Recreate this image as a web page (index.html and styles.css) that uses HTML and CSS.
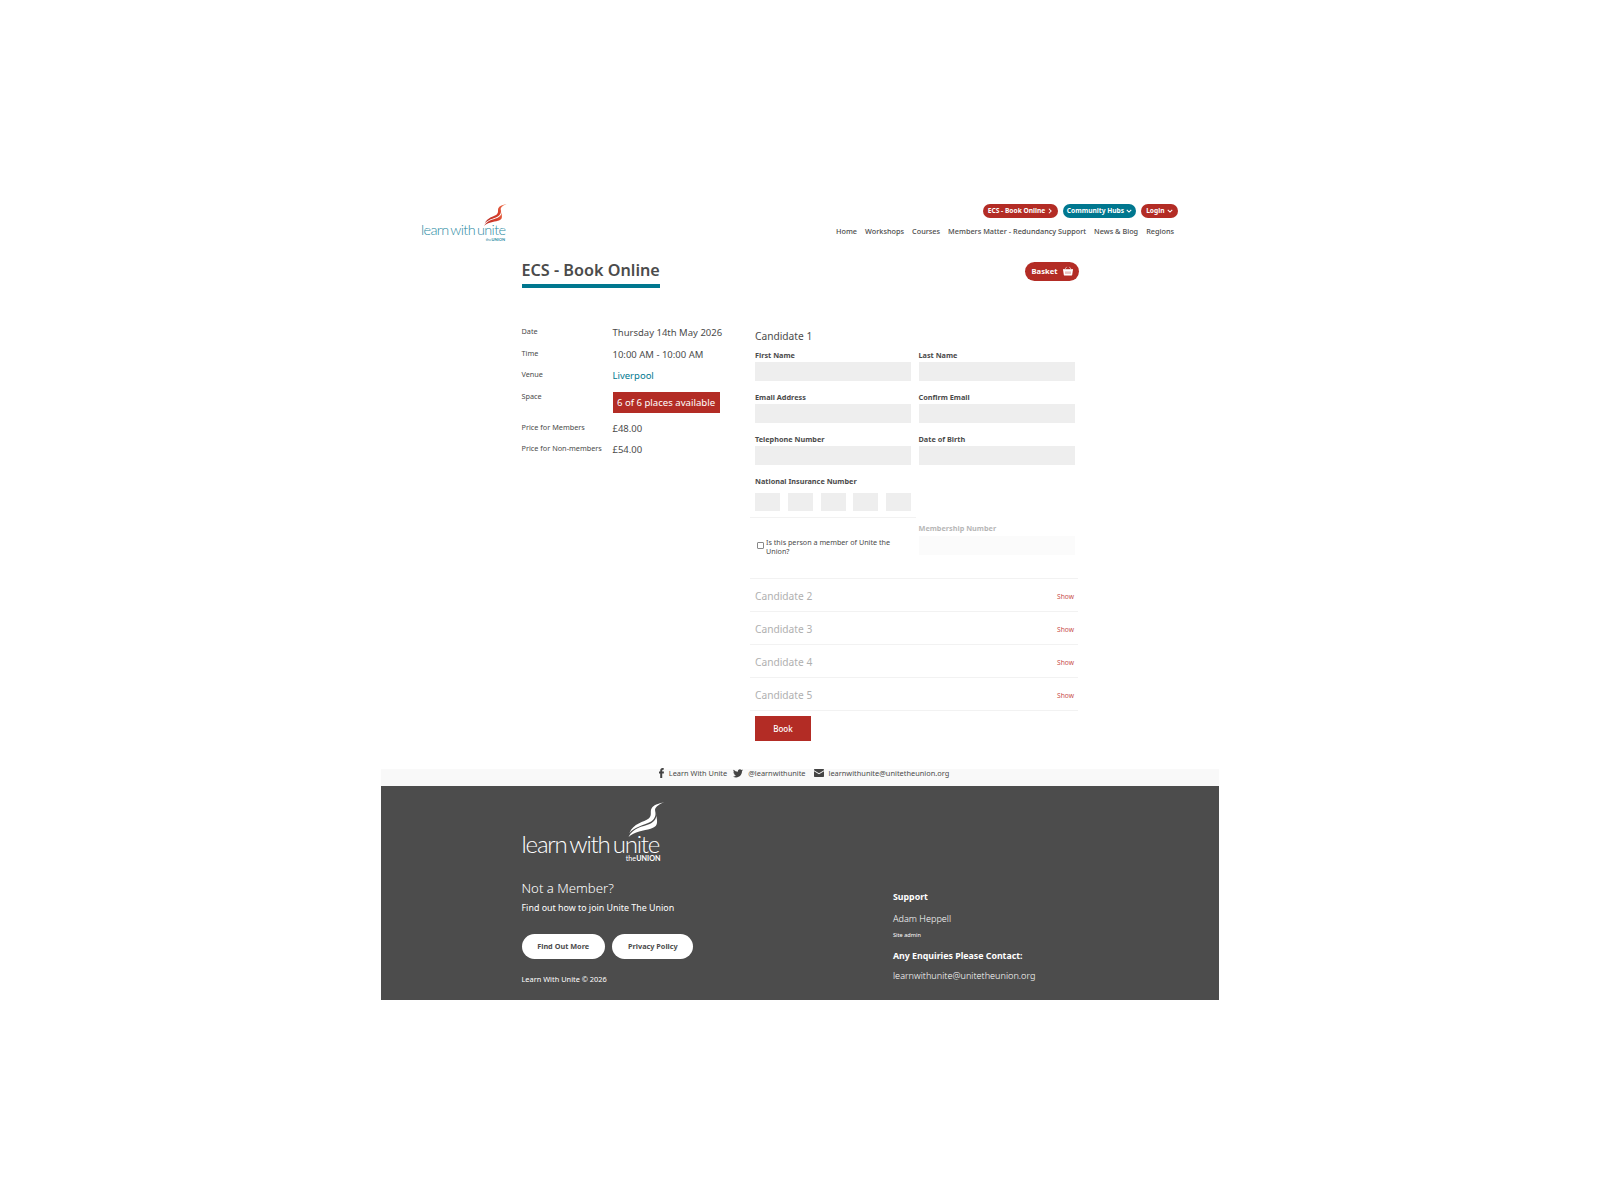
FILE: index.html
```html
<!DOCTYPE html>
<html lang="en">
<head>
    <meta charset="UTF-8">
    <title>ECS - Book Online | Learn With Unite</title>
    <link rel="stylesheet" href="styles.css">
</head>
<body>

<svg class="defs" width="0" height="0">
    <defs>
        <linearGradient id="flameRed" x1="0" y1="1" x2="1" y2="0">
            <stop offset="0" stop-color="#b52a23"/>
            <stop offset="0.6" stop-color="#d8402c"/>
            <stop offset="1" stop-color="#ee7a50"/>
        </linearGradient>
        <symbol id="flame" viewBox="0 0 40 38">
            <path d="M40 0C33 2 28 3 26 7c-2 4 1 7-3 11C18 22 6 23 2 34c5-7 16-9 22-12 6-3 7-8 6-12-1-4 3-7 10-10z"/>
            <path d="M31 12c1 5-1 9-7 12C16 27 6 28 1 38c6-6 17-7 24-9 6-2 7-4 7-8 0-3-1-6-1-9z"/>
        </symbol>
    </defs>
</svg>

<div class="page">
    <header class="top">
        <a class="logo">
            <svg class="logo-flame"><use href="#flame"/></svg>
            <span class="logo-text">learn with unite</span>
            <span class="logo-sub">the<b>UNION</b></span>
        </a>
        <div class="top-right">
            <div class="pills">
                <a class="pill">ECS - Book Online
                    <svg class="chev" viewBox="0 0 8 8"><path d="M2.500 1l3 3-3 3"/></svg>
                </a>
                <a class="pill pill-teal">Community Hubs
                    <svg class="chev" viewBox="0 0 8 8"><path d="M1 2.500l3 3 3-3"/></svg>
                </a>
                <a class="pill pill-login">Login
                    <svg class="chev" viewBox="0 0 8 8"><path d="M1 2.500l3 3 3-3"/></svg>
                </a>
            </div>
            <nav class="nav">
                <a>Home</a>
                <a>Workshops</a>
                <a>Courses</a>
                <a>Members Matter - Redundancy Support</a>
                <a>News &amp; Blog</a>
                <a>Regions</a>
            </nav>
        </div>
    </header>

    <main class="content">
        <div class="title-row">
            <h1>ECS - Book Online</h1>
            <a class="basket">Basket
                <svg class="basket-icon" viewBox="0 0 12 12"><path d="M0 4.200h12v1.300h-.6l-.8 5.500H1.400L.6 5.500H0zM2 4.200L4.500 1M10 4.200L7.500 1"/><path class="basket-gap" d="M3.600 6.500v3M6 6.500v3M8.400 6.500v3"/></svg>
            </a>
        </div>

        <div class="columns">
            <section class="info">
                <div class="info-row"><span class="info-label">Date</span><span class="info-value">Thursday 14th May 2026</span></div>
                <div class="info-row"><span class="info-label">Time</span><span class="info-value">10:00 AM - 10:00 AM</span></div>
                <div class="info-row"><span class="info-label">Venue</span><span class="info-value"><a class="venue">Liverpool</a></span></div>
                <div class="info-row info-row-space"><span class="info-label">Space</span><span class="places">6 of 6 places available</span></div>
                <div class="info-row"><span class="info-label">Price for Members</span><span class="info-value">£48.00</span></div>
                <div class="info-row"><span class="info-label">Price for Non-members</span><span class="info-value">£54.00</span></div>
            </section>

            <form class="booking">
                <h3 class="cand-title">Candidate 1</h3>
                <div class="fields">
                    <div class="field"><label>First Name</label><input type="text"></div>
                    <div class="field"><label>Last Name</label><input type="text"></div>
                    <div class="field"><label>Email Address</label><input type="text"></div>
                    <div class="field"><label>Confirm Email</label><input type="text"></div>
                    <div class="field"><label>Telephone Number</label><input type="text"></div>
                    <div class="field"><label>Date of Birth</label><input type="text"></div>
                    <div class="field ni">
                        <label>National Insurance Number</label>
                        <div class="ni-boxes">
                            <input type="text"><input type="text"><input type="text"><input type="text"><input type="text">
                        </div>
                    </div>
                </div>
                <div class="member-row">
                    <div class="member-check">
                        <input type="checkbox" id="member">
                        <label for="member">Is this person a member of Unite the Union?</label>
                    </div>
                    <div class="field field-off"><label>Membership Number</label><input type="text"></div>
                </div>
                <div class="cand-row"><span>Candidate 2</span><a>Show</a></div>
                <div class="cand-row"><span>Candidate 3</span><a>Show</a></div>
                <div class="cand-row"><span>Candidate 4</span><a>Show</a></div>
                <div class="cand-row cand-last"><span>Candidate 5</span><a>Show</a></div>
                <button type="button" class="book">Book</button>
            </form>
        </div>
    </main>

    <div class="social">
        <a><svg class="soc-icon soc-fb" viewBox="0 0 7 14"><path d="M6.600 0H4.900C2.900 0 1.700 1.300 1.700 3.400V5H0v2.600h1.700V14h2.800V7.600h2.200L7 5H4.500V3.700c0-.7.3-1.100 1.100-1.100h1z"/></svg>Learn With Unite</a>
        <a><svg class="soc-icon" viewBox="0 0 16 16"><path d="M5.026 15c6.038 0 9.341-5.003 9.341-9.334 0-.14 0-.282-.006-.422A6.685 6.685 0 0 0 16 3.542a6.658 6.658 0 0 1-1.889.518 3.301 3.301 0 0 0 1.447-1.817 6.533 6.533 0 0 1-2.087.793A3.286 3.286 0 0 0 7.875 6.030a9.325 9.325 0 0 1-6.767-3.429 3.289 3.289 0 0 0 1.018 4.382A3.323 3.323 0 0 1 .64 6.575v.045a3.288 3.288 0 0 0 2.632 3.218 3.203 3.203 0 0 1-.865.115 3.230 3.230 0 0 1-.614-.057 3.283 3.283 0 0 0 3.067 2.277A6.588 6.588 0 0 1 .78 13.580a6.320 6.320 0 0 1-.78-.045A9.344 9.344 0 0 0 5.026 15z"/></svg>@learnwithunite</a>
        <a><svg class="soc-icon" viewBox="0 0 14 11"><path d="M1 0h12a1 1 0 0 1 1 1v.6L7 6 0 1.600V1a1 1 0 0 1 1-1zM0 3l7 4.400L14 3v7a1 1 0 0 1-1 1H1a1 1 0 0 1-1-1z"/></svg>learnwithunite@unitetheunion.org</a>
    </div>

    <footer class="footer">
        <div class="footer-left">
            <a class="logo logo-big">
                <svg class="logo-flame"><use href="#flame"/></svg>
                <span class="logo-text">learn with unite</span>
                <span class="logo-sub">the<b>UNION</b></span>
            </a>
            <h3>Not a Member?</h3>
            <p class="join">Find out how to join Unite The Union</p>
            <div class="footer-btns">
                <a class="white-btn">Find Out More</a>
                <a class="white-btn">Privacy Policy</a>
            </div>
            <p class="copy">Learn With Unite © 2026</p>
        </div>
        <div class="footer-right">
            <h4>Support</h4>
            <p class="person">Adam Heppell</p>
            <p class="role">Site admin</p>
            <h4 class="enq">Any Enquiries Please Contact:</h4>
            <p class="person contact">learnwithunite@unitetheunion.org</p>
        </div>
    </footer>
</div>

</body>
</html>
```

FILE: styles.css
```css
* {
    box-sizing: border-box;
}
body {
    margin: 0;
    background-color: #fff;
    color: #4b4b4b;
    font-family: "Noto Sans", sans-serif;
}
a {
    color: inherit;
    text-decoration: none;
}
.defs {
    position: absolute;
}
.page {
    width: 838px;
    height: 1000px;
    margin: 0 auto;
    padding-top: 204px;
}

/* header */
.top {
    display: flex;
    justify-content: space-between;
    height: 58px;
    padding: 0 41px 0 40px;
}
.logo {
    display: flex;
    flex-direction: column;
    align-items: flex-end;
    width: 86px;
    height: 38px;
    color: #2b8ba3;
}
.logo-flame {
    width: 24px;
    height: 23px;
    fill: url(#flameRed);
}
.logo-text {
    width: 100%;
    margin-top: -3px;
    font-family: Lato, sans-serif;
    font-weight: 300;
    font-size: 14.5px;
    line-height: 14px;
    white-space: nowrap;
    word-spacing: -1.3px;
    letter-spacing: -0.65px;
}
.logo-sub {
    margin-right: 2px;
    font-family: Lato, sans-serif;
    font-size: 4px;
    line-height: 5px;
}
.top-right {
    display: flex;
    flex-direction: column;
    align-items: flex-end;
}
.pills {
    display: flex;
    gap: 4.5px;
}
.pill {
    display: flex;
    align-items: center;
    justify-content: space-between;
    gap: 2px;
    height: 14px;
    padding: 0 5px 1px;
    border-radius: 7px;
    background-color: #b32c25;
    color: #fff;
    font-size: 6.65px;
    font-weight: 700;
    white-space: nowrap;
}
.pill-teal {
    padding: 0 4px 1px;
    background-color: #00778f;
}
.pill-login {
    padding: 0 5.5px 1px;
}
.chev {
    width: 6px;
    height: 6px;
    fill: none;
    stroke: #fff;
    stroke-width: 1.4;
}
.nav {
    display: flex;
    gap: 8px;
    margin: 8px 4px 0 0;
    font-size: 7.3px;
    font-weight: 500;
    line-height: 11px;
    white-space: nowrap;
}

/* content */
.content {
    width: 698px;
    padding-left: 140.5px;
}
.title-row {
    display: flex;
    justify-content: space-between;
    align-items: flex-start;
}
h1 {
    margin: 0;
    height: 26px;
    border-bottom: 4px solid #00778f;
    font-size: 16.2px;
    font-weight: 600;
    line-height: 17px;
    white-space: nowrap;
}
.basket {
    display: flex;
    align-items: center;
    gap: 5px;
    height: 19px;
    padding: 0 6.5px 1px;
    border-radius: 10px;
    background-color: #b32c25;
    color: #fff;
    font-size: 7.6px;
    font-weight: 700;
}
.basket-icon {
    width: 10px;
    height: 10px;
    fill: #fff;
    stroke: #fff;
    stroke-width: 0.7;
}
.basket-gap {
    stroke: #b32c25;
}
.columns {
    display: flex;
    margin-top: 36px;
}

/* info column */
.info {
    width: 233.5px;
    padding-top: 1px;
}
.info-row {
    display: flex;
    align-items: flex-start;
    height: 21.5px;
}
.info-row-space {
    height: 31px;
}
.info-label {
    width: 91px;
    margin-top: -1px;
    font-size: 7.3px;
    line-height: 14px;
    white-space: nowrap;
}
.info-value {
    font-size: 9.5px;
    line-height: 16px;
    white-space: nowrap;
}
.venue {
    color: #00778f;
}
.places {
    width: 107px;
    height: 21px;
    margin-top: 2.5px;
    background-color: #b32c25;
    color: #fff;
    font-size: 9.6px;
    line-height: 21px;
    text-align: center;
    white-space: nowrap;
}

/* form column */
.booking {
    flex: none;
    width: 328px;
    margin-left: -5px;
}
.cand-title {
    height: 25px;
    margin: 0 5px;
    padding-top: 2px;
    font-size: 10.2px;
    font-weight: 400;
    line-height: 20px;
}
.fields {
    display: grid;
    grid-template-columns: 156px 156px;
    gap: 0 7.5px;
    padding: 0 5px;
}
.field {
    height: 42px;
}
.field label {
    display: block;
    height: 13px;
    font-size: 7.3px;
    font-weight: 700;
    line-height: 12px;
    white-space: nowrap;
}
.field input {
    display: block;
    width: 100%;
    height: 19px;
    border: none;
    background-color: #eee;
}
.ni {
    grid-column: 1;
}
.ni label {
    margin-bottom: 5px;
}
.ni-boxes {
    display: flex;
    justify-content: space-between;
}
.ni-boxes input {
    width: 25px;
    height: 18px;
}
.member-row {
    display: grid;
    grid-template-columns: 166px 156px;
    gap: 2.5px;
    height: 61px;
}
.member-check {
    display: flex;
    align-items: flex-start;
    padding: 19.5px 5px 0 7px;
    border-top: 1px solid #f2f2f2;
}
.member-check input {
    flex: none;
    width: 7px;
    height: 7px;
    margin: 4.5px 2px 0 0;
    border: 1px solid #888;
    border-radius: 1px;
    background-color: #fff;
    appearance: none;
}
.member-check label {
    font-size: 7.2px;
    line-height: 9.5px;
}
.field-off {
    margin-top: 4.5px;
    opacity: 0.4;
}
.field-off label {
    height: 14.5px;
}
.field-off input {
    opacity: 0.5;
}
.cand-row {
    display: flex;
    justify-content: space-between;
    align-items: center;
    height: 33px;
    padding: 2px 4px 0 5px;
    border-top: 1px solid #f2f2f2;
    color: #b0b0b0;
    font-size: 10.2px;
}
.cand-row a {
    color: #c9504a;
    font-size: 6.7px;
}
.cand-last {
    height: 34px;
    border-bottom: 1px solid #f2f2f2;
}
.book {
    display: block;
    width: 56px;
    height: 25px;
    margin: 5px 0 0 5px;
    border: none;
    background-color: #b32c25;
    color: #fff;
    font-family: inherit;
    font-size: 8px;
    font-weight: 500;
}

/* social strip */
.social {
    display: flex;
    justify-content: center;
    align-items: center;
    gap: 8px;
    height: 17px;
    margin-top: 28px;
    padding: 0 0 9px 8px;
    background-color: #f9f9f9;
    font-size: 7.4px;
    white-space: nowrap;
}
.social a {
    display: flex;
    align-items: center;
    gap: 5px;
}
.social a:first-child {
    margin-right: -2px;
}
.soc-icon {
    width: 10px;
    height: 10px;
    fill: #444;
}
.soc-fb {
    width: 5px;
}

/* footer */
.footer {
    display: flex;
    height: 214px;
    padding: 16px 0 0 140.5px;
    background-color: #4c4c4c;
    color: #fff;
}
.footer-left {
    width: 371.5px;
}
.logo-big {
    width: 144px;
    height: 61px;
    color: #fff;
}
.logo-big .logo-flame {
    width: 40px;
    height: 38px;
    fill: #fff;
}
.logo-big .logo-text {
    margin-top: -3px;
    font-size: 24px;
    line-height: 20px;
    word-spacing: -2.2px;
    letter-spacing: -1.2px;
}
.logo-big .logo-sub {
    margin: 1px 5px 0 0;
    font-size: 7.2px;
    line-height: 8px;
}
.footer h3 {
    margin: 15.5px 0 0;
    font-size: 13.2px;
    font-weight: 300;
    line-height: 18px;
}
.join {
    margin: 4.5px 0 0;
    font-size: 8.9px;
    line-height: 14px;
}
.footer-btns {
    display: flex;
    gap: 7.5px;
    margin-top: 19px;
}
.white-btn {
    display: flex;
    align-items: center;
    justify-content: center;
    height: 25px;
    padding: 0 15.7px 1px;
    border-radius: 13px;
    background-color: #fff;
    color: #4c4c4c;
    font-size: 7.3px;
    font-weight: 700;
}
.copy {
    margin: 14px 0 0;
    font-size: 7.4px;
    line-height: 12px;
}
.footer-right {
    padding-top: 88px;
}
.footer-right h4 {
    margin: 0;
    font-size: 8.8px;
    font-weight: 700;
    line-height: 14px;
}
.person {
    margin: 8px 0 0;
    font-size: 9.1px;
    font-weight: 300;
    line-height: 14px;
}
.role {
    margin: 4.5px 0 0;
    font-size: 5.6px;
    line-height: 9px;
}
.footer-right .enq {
    margin-top: 9.5px;
}
.contact {
    margin-top: 6px;
}
```
